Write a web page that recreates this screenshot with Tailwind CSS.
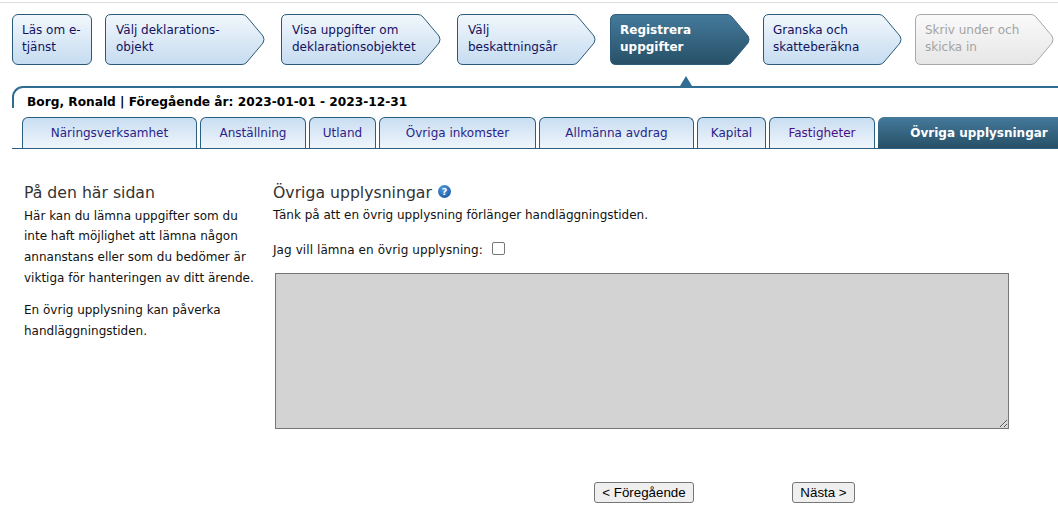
<!DOCTYPE html>
<html lang="sv">
<head>
<meta charset="utf-8">
<script src="https://cdn.jsdelivr.net/npm/@tailwindcss/browser@4"></script>
</head>
<body class="bg-white font-['DejaVu_Sans','Verdana',sans-serif] text-[12px] text-[#111] overflow-hidden">
<div class="w-[1058px] h-[521px] mt-[2px] overflow-hidden border-t border-[#dddddd]">

  <svg class="absolute w-0 h-0" aria-hidden="true">
    <defs>
      <linearGradient id="gb" x1="0" y1="0" x2="0" y2="1"><stop offset="0" stop-color="#f2f7fc"/><stop offset="1" stop-color="#c5dcf1"/></linearGradient>
      <linearGradient id="gd" x1="0" y1="0" x2="0" y2="1"><stop offset="0" stop-color="#457a9c"/><stop offset="1" stop-color="#275067"/></linearGradient>
      <linearGradient id="gg" x1="0" y1="0" x2="0" y2="1"><stop offset="0" stop-color="#fafafa"/><stop offset="1" stop-color="#e6e6e6"/></linearGradient>
      <radialGradient id="gi" cx="0.4" cy="0.3" r="0.8"><stop offset="0" stop-color="#4f9be0"/><stop offset="1" stop-color="#17569f"/></radialGradient>
    </defs>
  </svg>

  <!-- Steps -->
  <nav class="flex h-[51px] mt-[11px] ml-[12px] leading-[17px]">
    <div class="relative w-[80px] h-[51px] rounded-[6px] border border-[#2a5a78] bg-gradient-to-b from-[#f2f7fc] to-[#c5dcf1] pl-[9px] pt-[7px] text-[#12125e]">Läs om e-<br>tjänst</div>

    <div class="relative w-[160px] h-[51px] ml-[13px] pl-[11px] pt-[8px] text-[#12125e]">
      <svg class="absolute inset-0" width="160" height="51" viewBox="0 0 160 51"><path d="M6 .5H137Q140 .5 142 3L158 22Q160 25.500 158 29L142 48Q140 50.500 137 50.500H6Q.5 50.500 .5 45V6Q.5 .5 6 .5Z" fill="url(#gb)" stroke="#2a5a78"/></svg>
      <span class="relative">Välj deklarations-<br>objekt</span>
    </div>

    <div class="relative w-[160px] h-[51px] ml-[16px] pl-[11px] pt-[8px] text-[#12125e]">
      <svg class="absolute inset-0" width="160" height="51" viewBox="0 0 160 51"><path d="M6 .5H137Q140 .5 142 3L158 22Q160 25.500 158 29L142 48Q140 50.500 137 50.500H6Q.5 50.500 .5 45V6Q.5 .5 6 .5Z" fill="url(#gb)" stroke="#2a5a78"/></svg>
      <span class="relative">Visa uppgifter om<br>deklarationsobjektet</span>
    </div>

    <div class="relative w-[139px] h-[51px] ml-[16px] pl-[11px] pt-[8px] text-[#12125e]">
      <svg class="absolute inset-0" width="139" height="51" viewBox="0 0 139 51"><path d="M6 .5H116Q119 .5 121 3L137 22Q139 25.500 137 29L121 48Q119 50.500 116 50.500H6Q.5 50.500 .5 45V6Q.5 .5 6 .5Z" fill="url(#gb)" stroke="#2a5a78"/></svg>
      <span class="relative">Välj<br>beskattningsår</span>
    </div>

    <div class="relative w-[140px] h-[51px] ml-[14px] pl-[10px] pt-[8px] text-white font-bold">
      <svg class="absolute inset-0" width="140" height="51" viewBox="0 0 140 51"><path d="M6 .5H117Q120 .5 122 3L138 22Q140 25.500 138 29L122 48Q120 50.500 117 50.500H6Q.5 50.500 .5 45V6Q.5 .5 6 .5Z" fill="url(#gd)" stroke="#2d5d7a"/></svg>
      <span class="relative">Registrera<br>uppgifter</span>
    </div>

    <div class="relative w-[139px] h-[51px] ml-[13px] pl-[10px] pt-[8px] text-[#12125e]">
      <svg class="absolute inset-0" width="139" height="51" viewBox="0 0 139 51"><path d="M6 .5H116Q119 .5 121 3L137 22Q139 25.500 137 29L121 48Q119 50.500 116 50.500H6Q.5 50.500 .5 45V6Q.5 .5 6 .5Z" fill="url(#gb)" stroke="#2a5a78"/></svg>
      <span class="relative">Granska och<br>skatteberäkna</span>
    </div>

    <div class="relative w-[139px] h-[51px] ml-[13px] pl-[10px] pt-[8px] text-[#a3a3a3]">
      <svg class="absolute inset-0" width="139" height="51" viewBox="0 0 139 51"><path d="M6 .5H116Q119 .5 121 3L137 22Q139 25.500 137 29L121 48Q119 50.500 116 50.500H6Q.5 50.500 .5 45V6Q.5 .5 6 .5Z" fill="url(#gg)" stroke="#a8a8a8"/></svg>
      <span class="relative">Skriv under och<br>skicka in</span>
    </div>
  </nav>

  <!-- Pointer -->
  <div class="ml-[680px] mt-[11px] w-0 h-0 border-x-[6px] border-x-transparent border-b-[10px] border-b-[#2f6d92]"></div>

  <!-- Taxpayer header -->
  <div class="ml-[12px] h-[22px] rounded-tl-[11px] border-t-2 border-l-2 border-[#2f6d92] pl-[13px] pt-[7px] text-[12.2px] leading-[14px] font-bold text-black">Borg, Ronald | Föregående år: 2023-01-01 - 2023-12-31</div>

  <!-- Tabs -->
  <div class="ml-[12px] mt-[9px] h-[32px] border-b border-[#2a5f80] pl-[10px] flex items-stretch gap-[3px] text-[#2a1f8a]">
    <a class="w-[175px] shrink-0 flex items-center justify-center rounded-t-[6px] border border-b-0 border-[#2a5f80] bg-gradient-to-b from-[#c9def2] to-[#eff5fb]">Näringsverksamhet</a>
    <a class="w-[106px] shrink-0 flex items-center justify-center rounded-t-[6px] border border-b-0 border-[#2a5f80] bg-gradient-to-b from-[#c9def2] to-[#eff5fb]">Anställning</a>
    <a class="w-[67px] shrink-0 flex items-center justify-center rounded-t-[6px] border border-b-0 border-[#2a5f80] bg-gradient-to-b from-[#c9def2] to-[#eff5fb]">Utland</a>
    <a class="w-[157px] shrink-0 flex items-center justify-center rounded-t-[6px] border border-b-0 border-[#2a5f80] bg-gradient-to-b from-[#c9def2] to-[#eff5fb]">Övriga inkomster</a>
    <a class="w-[155px] shrink-0 flex items-center justify-center rounded-t-[6px] border border-b-0 border-[#2a5f80] bg-gradient-to-b from-[#c9def2] to-[#eff5fb]">Allmänna avdrag</a>
    <a class="w-[69px] shrink-0 flex items-center justify-center rounded-t-[6px] border border-b-0 border-[#2a5f80] bg-gradient-to-b from-[#c9def2] to-[#eff5fb]">Kapital</a>
    <a class="w-[106px] shrink-0 flex items-center justify-center rounded-t-[6px] border border-b-0 border-[#2a5f80] bg-gradient-to-b from-[#c9def2] to-[#eff5fb] text-[#4b0f86]">Fastigheter</a>
    <a class="w-[180px] shrink-0 flex items-center justify-center pl-[22px] rounded-tl-[6px] bg-gradient-to-b from-[#457a9c] to-[#275067] text-white font-bold">Övriga upplysningar</a>
  </div>

  <!-- Main -->
  <div class="flex mt-[34px]">
    <aside class="w-[273px] shrink-0 pl-[24px]">
      <h2 class="text-[15.7px] leading-[20px] font-normal text-[#333]">På den här sidan</h2>
      <p class="mt-[2.500px] leading-[20.7px] w-[236px]">Här kan du lämna uppgifter som du inte haft möjlighet att lämna någon annanstans eller som du bedömer är viktiga för hanteringen av ditt ärende.</p>
      <p class="mt-[11.500px] leading-[20.7px] w-[236px]">En övrig upplysning kan påverka handläggningstiden.</p>
    </aside>
    <section class="flex-1">
      <h2 class="flex items-center text-[15.7px] leading-[20px] font-normal text-[#333]">Övriga upplysningar
        <svg class="ml-[6px] -mt-[3px]" width="13" height="13" viewBox="0 0 13 13"><circle cx="6.500" cy="6.500" r="6.500" fill="url(#gi)"/><text x="6.500" y="10" text-anchor="middle" font-size="9.500" font-weight="700" fill="#fff" font-family="DejaVu Sans">?</text></svg>
      </h2>
      <p class="mt-[2px] leading-[20px]">Tänk på att en övrig upplysning förlänger handläggningstiden.</p>
      <label class="flex items-center mt-[18px] h-[14px] tracking-[0.08px]">Jag vill lämna en övrig upplysning:<input type="checkbox" class="ml-[9px] w-[13px] h-[13px] appearance-none rounded-[2px] border border-[#767676] bg-white -mt-[4px]"></label>
      <textarea disabled class="block ml-[2px] mt-[16px] w-[734px] h-[156px] bg-[#d3d3d3] border border-[#767676] resize"></textarea>
      <div class="flex mt-[53px] ml-[321px] font-['Liberation_Sans',Arial,sans-serif] text-[13.33px] text-black">
        <button class="w-[100px] h-[21px] bg-[#efefef] border border-[#767676] rounded-[3px]">&lt; Föregående</button>
        <button class="w-[63px] h-[21px] ml-[98px] bg-[#efefef] border border-[#767676] rounded-[3px]">Nästa &gt;</button>
      </div>
    </section>
  </div>
</div>
</body>
</html>
